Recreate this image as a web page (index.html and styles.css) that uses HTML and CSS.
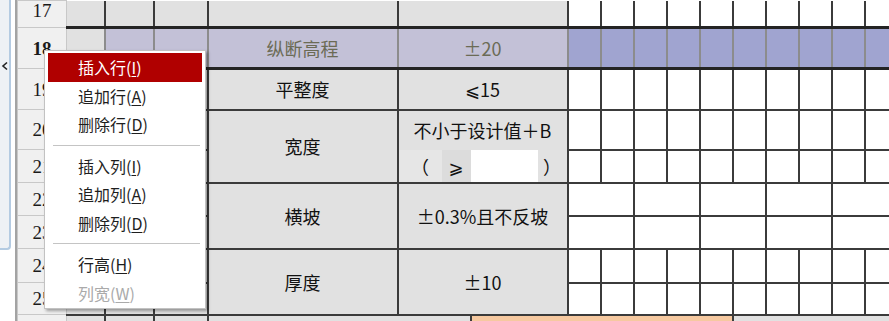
FILE: index.html
```html
<!DOCTYPE html>
<html lang="zh-CN">
<head>
<meta charset="utf-8">
<title>表格</title>
<link rel="stylesheet" href="styles.css">
</head>
<body>
<div class="app">
  <div class="edge">
    <div class="thumb">
      <svg class="chev" width="8" height="10" viewBox="0 0 8 10"><polyline points="6,1.5 2,5 6,8.5" fill="none" stroke="#222" stroke-width="1.6"/></svg>
    </div>
  </div>
  <table class="sheet">
    <colgroup>
      <col class="c-rh"><col class="c-a"><col class="c-b"><col class="c-c"><col class="c-d">
      <col class="c-e1"><col class="c-e2"><col class="c-e3"><col class="c-e4">
      <col class="c-s"><col class="c-s"><col class="c-s"><col class="c-s"><col class="c-s">
      <col class="c-s"><col class="c-s"><col class="c-s"><col class="c-s"><col class="c-s">
    </colgroup>
    <tr class="r17">
      <td class="rh">17</td><td class="a"></td><td></td><td></td><td></td><td colspan="4"></td>
      <td class="s"></td><td class="s"></td><td class="s"></td><td class="s"></td><td class="s"></td>
      <td class="s"></td><td class="s"></td><td class="s"></td><td class="s"></td><td class="s"></td>
    </tr>
    <tr class="r18">
      <td class="rh bold">18</td><td class="a"></td><td class="lav"></td><td class="lav"></td>
      <td class="lav dim">纵断高程</td><td class="lav dim" colspan="4">±20</td>
      <td class="blue"></td><td class="blue"></td><td class="blue"></td><td class="blue"></td><td class="blue"></td>
      <td class="blue"></td><td class="blue"></td><td class="blue"></td><td class="blue"></td><td class="blue"></td>
    </tr>
    <tr class="r19">
      <td class="rh">19</td><td class="a"></td><td></td><td></td><td>平整度</td><td colspan="4">⩽15</td>
      <td class="s"></td><td class="s"></td><td class="s"></td><td class="s"></td><td class="s"></td>
      <td class="s"></td><td class="s"></td><td class="s"></td><td class="s"></td><td class="s"></td>
    </tr>
    <tr class="r20">
      <td class="rh">20</td><td class="a"></td><td></td><td></td><td rowspan="2">宽度</td>
      <td class="etop" colspan="4">不小于设计值＋B</td>
      <td class="s"></td><td class="s"></td><td class="s"></td><td class="s"></td><td class="s"></td>
      <td class="s"></td><td class="s"></td><td class="s"></td><td class="s"></td><td class="s"></td>
    </tr>
    <tr class="r21">
      <td class="rh">21</td><td class="a"></td><td></td><td></td>
      <td class="e1">（</td><td class="e2">⩾</td><td class="e3"></td><td class="e4">）</td>
      <td class="s"></td><td class="s"></td><td class="s"></td><td class="s"></td><td class="s"></td>
      <td class="s"></td><td class="s"></td><td class="s"></td><td class="s"></td><td class="s"></td>
    </tr>
    <tr class="r22">
      <td class="rh">22</td><td class="a"></td><td></td><td></td><td rowspan="2">横坡</td>
      <td colspan="4" rowspan="2">±0.3%且不反坡</td>
      <td class="s" colspan="2"></td><td class="s" colspan="2"></td><td class="s" colspan="2"></td>
      <td class="s" colspan="2"></td><td class="s" colspan="2"></td>
    </tr>
    <tr class="r23">
      <td class="rh">23</td><td class="a"></td><td></td><td></td>
      <td class="s" colspan="2"></td><td class="s" colspan="2"></td><td class="s" colspan="2"></td>
      <td class="s" colspan="2"></td><td class="s" colspan="2"></td>
    </tr>
    <tr class="r24">
      <td class="rh">24</td><td class="a"></td><td></td><td></td><td rowspan="2">厚度</td>
      <td colspan="4" rowspan="2">±10</td>
      <td class="s"></td><td class="s"></td><td class="s"></td><td class="s"></td><td class="s"></td>
      <td class="s"></td><td class="s"></td><td class="s"></td><td class="s"></td><td class="s"></td>
    </tr>
    <tr class="r25">
      <td class="rh">25</td><td class="a"></td><td></td><td></td>
      <td class="s"></td><td class="s"></td><td class="s"></td><td class="s"></td><td class="s"></td>
      <td class="s"></td><td class="s"></td><td class="s"></td><td class="s"></td><td class="s"></td>
    </tr>
    <tr class="r26">
      <td class="rh"></td><td class="a"></td><td></td><td></td>
      <td colspan="3"></td><td class="peach" colspan="7"></td><td colspan="5"></td>
    </tr>
  </table>

  <div class="menu">
    <div class="item active">插入行(<u>I</u>)</div>
    <div class="item">追加行(<u>A</u>)</div>
    <div class="item">删除行(<u>D</u>)</div>
    <div class="sep"></div>
    <div class="item">插入列(<u>I</u>)</div>
    <div class="item">追加列(<u>A</u>)</div>
    <div class="item">删除列(<u>D</u>)</div>
    <div class="sep"></div>
    <div class="item">行高(<u>H</u>)</div>
    <div class="item disabled">列宽(<u>W</u>)</div>
  </div>
</div>
</body>
</html>
```

FILE: styles.css
```css
html, body {
  margin: 0;
  padding: 0;
  overflow: hidden;
  background: #ffffff;
}

body {
  width: 889px;
  height: 321px;
  font-family: "Noto Sans CJK SC", "DejaVu Sans", sans-serif;
}

.app {
  position: relative;
  display: flex;
  align-items: flex-start;
  height: 321px;
  overflow: hidden;
}

.edge {
  flex: none;
  width: 15px;
  height: 321px;
  border-right: 2px solid #a3a3a3;
  background: #ffffff;
}

.thumb {
  width: 11px;
  height: 250px;
  box-sizing: border-box;
  padding-top: 61px;
  background: #eef1f5;
  border-right: 2px solid #b4cbe2;
  border-bottom: 2px solid #b4cbe2;
  border-bottom-right-radius: 4px;
}

.chev {
  display: block;
  margin-left: 1px;
}

/* ---------- sheet ---------- */
.sheet {
  flex: none;
  border-collapse: collapse;
  table-layout: fixed;
  width: 880px;
}

.c-rh { width: 49px; }
.c-a  { width: 38px; }
.c-b  { width: 49px; }
.c-c  { width: 54px; }
.c-d  { width: 190px; }
.c-e1 { width: 44px; }
.c-e2 { width: 29px; }
.c-e3 { width: 67px; }
.c-e4 { width: 30px; }
.c-s  { width: 33px; }

.sheet td {
  border: 2px solid #3b3b3b;
  padding: 0;
  background: #e1e1e1;
  color: #111111;
  font-size: 18px;
  line-height: 1;
  text-align: center;
  vertical-align: middle;
  white-space: nowrap;
  overflow: hidden;
}

.sheet td.s { background: #ffffff; }

.sheet td.rh {
  background: #f0f0f0;
  border: 1px solid #c8c8c8;
  font-family: "Liberation Serif", serif;
  font-size: 19px;
  color: #1a1a1a;
}

.sheet td.rh.bold { font-weight: bold; }

.sheet td.a { border-left: 1px solid #b4b4b4; }

.r17 { height: 27px; }
.r18 { height: 41px; }
.r19 { height: 41px; }
.r20 { height: 40px; }
.r21 { height: 33px; }
.r22 { height: 33px; }
.r23 { height: 33px; }
.r24 { height: 34px; }
.r25 { height: 32px; }
.r26 { height: 30px; }

.r17 td { border-top-style: hidden; }
.r17 td.rh {
  vertical-align: top;
  line-height: 19px;
}

.r18 td {
  border-top: 3px solid #242424;
  border-bottom: 3px solid #242424;
  border-left-color: #8c8c8c;
  border-right-color: #8c8c8c;
}

.r18 td.rh {
  border-top: 1px solid #c8c8c8;
  border-bottom: 1px solid #c8c8c8;
}

.sheet td.lav { background: #c3c1d7; }
.sheet td.dim { color: #6b6b55; }
.sheet td.blue { background: #a0a4d0; }

.sheet td.etop { border-bottom-style: hidden; }

.sheet td.e1 {
  border-top-style: hidden;
  border-right-style: hidden;
  background: #e6e6e6;
}
.sheet td.e2 {
  border-top-style: hidden;
  border-right-style: hidden;
  background: #dcdcdc;
}
.sheet td.e3 {
  border-top-style: hidden;
  border-right-style: hidden;
  background: #ffffff;
}
.sheet td.e4 {
  border-top-style: hidden;
  background: #e2e2e2;
}

.sheet td.peach { background: #f6c9a0; }

/* ---------- context menu ---------- */
.menu {
  position: absolute;
  left: 44px;
  top: 50px;
  width: 162px;
  height: 259px;
  box-sizing: border-box;
  padding: 2px 3px 0 3px;
  background: #ffffff;
  border: 1px solid #c2c2c2;
  box-shadow: 2px 2px 3px rgba(0, 0, 0, 0.35);
  font-family: "Noto Sans CJK SC", sans-serif;
  font-size: 16px;
  color: #1e1e1e;
}

.item {
  display: flex;
  align-items: center;
  height: 28.5px;
  padding-left: 30px;
  line-height: 1;
}

.item u {
  text-decoration-thickness: 1px;
  text-underline-offset: 2px;
}

.item.active {
  background: #b00000;
  color: #ffffff;
}

.item.disabled { color: #aaaaaa; }

.sep {
  height: 1px;
  margin: 6px 2px 6px 5px;
  background: #c4c4c4;
}
```
